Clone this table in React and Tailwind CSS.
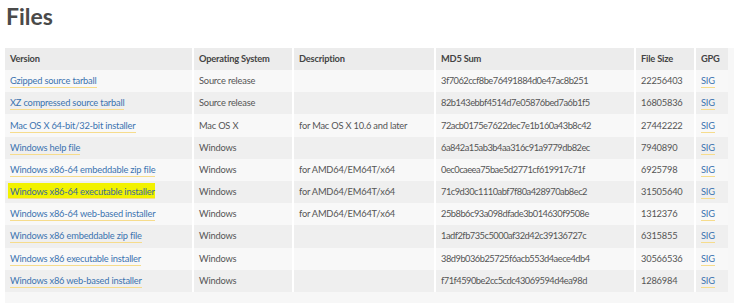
import React from "react";

const rows = [
  ["Gzipped source tarball", "Source release", "", "3f7062ccf8be76491884d0e47ac8b251", "22256403"],
  ["XZ compressed source tarball", "Source release", "", "82b143ebbf4514d7e05876bed7a6b1f5", "16805836"],
  ["Mac OS X 64-bit/32-bit installer", "Mac OS X", "for Mac OS X 10.6 and later", "72acb0175e7622dec7e1b160a43b8c42", "27442222"],
  ["Windows help file", "Windows", "", "6a842a15ab3b4aa316c91a9779db82ec", "7940890"],
  ["Windows x86-64 embeddable zip file", "Windows", "for AMD64/EM64T/x64", "0ec0caeea75bae5d2771cf619917c71f", "6925798"],
  ["Windows x86-64 executable installer", "Windows", "for AMD64/EM64T/x64", "71c9d30c1110abf7f80a428970ab8ec2", "31505640", true],
  ["Windows x86-64 web-based installer", "Windows", "for AMD64/EM64T/x64", "25b8b6c93a098dfade3b014630f9508e", "1312376"],
  ["Windows x86 embeddable zip file", "Windows", "", "1adf2fb735c5000af32d42c39136727c", "6315855"],
  ["Windows x86 executable installer", "Windows", "", "38d9b036b25725f6acb553d4aece4db4", "30566536"],
  ["Windows x86 web-based installer", "Windows", "", "f71f4590be2cc5cdc43069594d4ea98d", "1286984"],
];

function Link({ children, hl }) {
  return (
    <span className={"pb-[1px] border-b border-[#f6dc8c] " + (hl ? "bg-[#f2f200] text-[#3a6a9a] py-[3px] -ml-[2px] pl-[2px]" : "text-[#3b73b0]")}>
      {children}
    </span>
  );
}

export default function App() {
  return (
    <div className="w-[734px] h-[303px] bg-white overflow-hidden text-[#555]" style={{ fontFamily: "Lato, 'Liberation Sans', sans-serif" }}>
      <h1 className="pl-[6px] pt-[2px] h-[48px] text-[23px] font-bold text-[#4a4a4a] leading-[28px]">Files</h1>
      <div className="ml-[5px] bg-[#f7f7f7] pb-[12px]">
        <table className="table-fixed border-collapse w-[723px] text-[9.3px] tracking-[-0.2px]">
          <colgroup>
            <col className="w-[188px]" />
            <col className="w-[100px]" />
            <col className="w-[142px]" />
            <col className="w-[200px]" />
            <col className="w-[60px]" />
            <col className="w-[33px]" />
          </colgroup>
          <thead>
            <tr className="bg-[#ececec] h-[22px]">
              {["Version", "Operating System", "Description", "MD5 Sum", "File Size", "GPG"].map((h, i) => (
                <th key={h} className={"text-left font-bold text-[#444] px-[5px] p-0 " + (i < 5 ? "border-r-2 border-white" : "")}>
                  {h}
                </th>
              ))}
            </tr>
          </thead>
          <tbody>
            {rows.map((r, idx) => (
              <tr key={r[0]} className={(idx % 2 === 0 ? "bg-[#f8f8f8]" : "bg-[#efefef]") + " h-[22.2px]"}>
                <td className="px-[5px] border-r-2 border-white whitespace-nowrap">
                  <Link hl={r[5]}>{r[0]}</Link>
                </td>
                <td className="px-[5px] border-r-2 border-white whitespace-nowrap">{r[1]}</td>
                <td className="px-[5px] border-r-2 border-white whitespace-nowrap">{r[2]}</td>
                <td className="px-[5px] border-r-2 border-white whitespace-nowrap tracking-[-0.5px]">{r[3]}</td>
                <td className="px-[5px] border-r-2 border-white whitespace-nowrap">{r[4]}</td>
                <td className="px-[5px] whitespace-nowrap">
                  <Link>SIG</Link>
                </td>
              </tr>
            ))}
          </tbody>
        </table>
      </div>
    </div>
  );
}
